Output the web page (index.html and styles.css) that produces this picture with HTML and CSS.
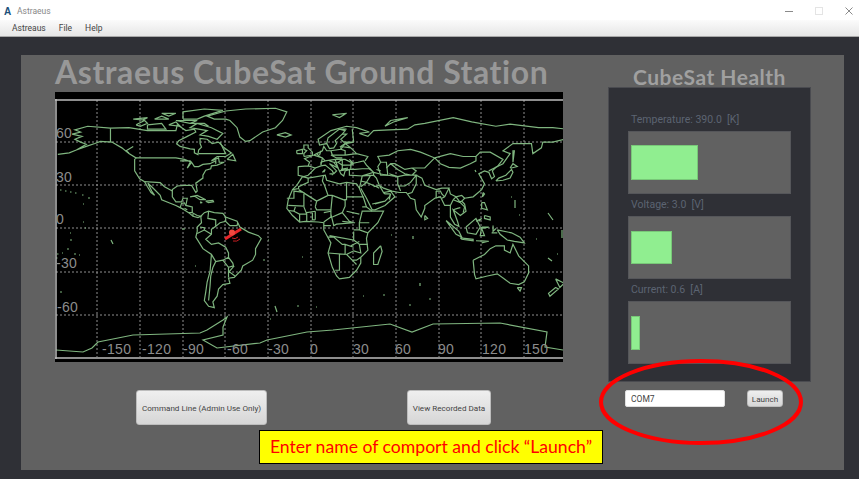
FILE: index.html
```html
<!DOCTYPE html>
<html lang="en">
<head>
    <meta charset="UTF-8">
    <title>Astraeus</title>
    <link rel="stylesheet" href="styles.css">
</head>
<body>

    <div class="titlebar">
        <span class="app-icon">A</span>
        <span class="app-name">Astraeus</span>
        <div class="win-controls">
            <svg width="10" height="10" viewBox="0 0 10 10"><path d="M1 5.5h8" stroke="#8a8a8a" fill="none"/></svg>
            <svg width="10" height="10" viewBox="0 0 10 10"><rect x="1.5" y="1.5" width="7" height="7" stroke="#e4e4e4" fill="none"/></svg>
            <svg width="10" height="10" viewBox="0 0 10 10"><path d="M1.5 1.5l7 7M8.5 1.5l-7 7" stroke="#8a8a8a" fill="none"/></svg>
        </div>
    </div>

    <div class="menubar">
        <span>Astreaus</span>
        <span>File</span>
        <span>Help</span>
    </div>

    <div class="panel">
        <div class="left">
            <h1>Astraeus CubeSat Ground Station</h1>

            <svg class="map" width="508" height="270" viewBox="55 92 508 270">
                <rect x="55" y="92" width="508" height="270" fill="#000"/>

                <!-- graticule, every 30 degrees -->
                <path class="grid" d="M97 100V357M140 100V357M183 100V357M225 100V357M268 100V357M311 100V357M353 100V357M396 100V357M439 100V357M481 100V357M524 100V357"/>
                <path class="grid" d="M56 142H563M56 185H563M56 228H563M56 272H563M56 315H563"/>

                <!-- land, drawn in lon/lat -->
                <g transform="translate(311 228.5) scale(1.4222 -1.44)">
                    <!-- north america -->
                    <path class="coast" d="M-168 65.5L-162 67L-166 68.5L-157 71L-141 69.7L-128 70L-115 68L-108 68L-95 68L-94 72L-88 68L-82 69L-81 67L-87 64L-93 61L-94.5 58.8L-92 57L-85 55.3L-82 55L-82 52.5L-79.5 51.3L-79 54.5L-77 56.5L-78 59L-78 62.5L-73 62L-69.5 59L-65 60L-61 56L-56 52.5L-60 50L-66 50L-70 47L-65 49L-64.5 46L-61 46L-66 44L-70 43.5L-70.5 41.5L-74 40.5L-76 37L-76 35L-81 31.5L-80 26L-81 25L-82.8 28L-84 30L-89 30L-94 29.5L-97.5 27L-97.5 22L-95 18.5L-91 18.5L-90 21L-87 21L-88 16L-83.5 15L-83.5 11L-80 9L-77.5 8.5L-79.5 7.5L-83 8.5L-86 11L-91 14L-95 16L-105 20L-106 23L-112 29L-114.7 31.5L-112 26L-110 23L-112.5 25L-115 29L-117 32.5L-120.5 34.5L-124 40L-124 48L-123 49L-128 52L-133 56L-140 60L-148 60.5L-152 59L-158 57L-165 54.5L-158 58.5L-162 60L-166 62L-161 64L-168 65.5M-178 51.5L-170 52.5L-165 54.5"/>
                    <path class="coast" d="M-141 69.7V60M-123 49H-95L-89 48L-84 46L-82 43L-79 43L-76 44.5L-71 45L-67 47L-67 45M-117 32.5L-106 31.8L-103 29L-97.5 26M-92 47L-85 47L-84 46L-87 42L-85 46M-92 14.5L-91 17.5L-89 17.8L-88 16M-89 14L-87 13M-83.5 11L-86 11M-83 8.5L-83 10M-79 52L-60 52L-64 60"/>
                    <path class="coast" d="M-80 73L-70 70L-62 66L-66 62L-72 64L-78 65L-73 68L-85 70L-80 73M-115 72L-105 73L-102 69L-115 69L-115 72M-90 76L-80 76L-75 78L-62 82L-75 83L-90 81L-90 76M-123 72L-117 75L-115 73L-120 71L-123 72M-95 75L-80 75L-85 73L-95 75M-59 48L-55 51.5L-53 47L-59 48M-110 76L-100 76L-105 78L-110 76M-125 57L-130 54L-128 52.5M-100 72L-95 74L-92 71L-100 72M-85 73L-75 73L-72 71M-125 76L-115 77L-118 75.5L-125 76M-105 80L-95 80L-100 78L-105 80"/>
                    <path class="coast" d="M-60 81.6L-46 83L-25 83.5L-17 81L-20 75L-25 70L-34 67L-43 61L-46 60.5L-50 63.5L-52 70L-57 75L-60 76L-68 76L-73 78L-60 81.6M-24 65L-18 66.5L-14 65L-18 63.5L-24 65"/>
                    <path class="coast" d="M-85 22L-80 23L-74 20L-78 20L-82 22.5L-85 22M-74 19L-69 19.5L-68.5 18.5L-72 18L-74 19M-78 18.5L-76.5 18L-78 17.8"/>

                    <!-- south america -->
                    <path class="coast" d="M-77.5 8.5L-75 11L-72 12L-68 11L-62 10.5L-60 8L-52 5L-50 1L-44 -2.5L-37 -5L-35 -7L-39 -14L-39 -18L-41 -22L-48 -26L-49 -29L-54 -34L-58 -34.5L-57 -38L-62 -39L-65 -42L-66 -47L-69 -51L-68 -55L-72 -54L-75 -50L-74 -44L-73 -37L-71 -30L-70 -18L-76 -14L-81 -6L-80 -2L-80 1L-77 4L-77.5 8.5"/>
                    <path class="coast" d="M-72 12L-72.5 7L-67 6L-67 1.5L-70 -0.5L-70 -4L-74 -7.5L-70 -11L-65 -10L-60 -13L-58 -17L-58 -20L-62 -22L-67 -23L-70 -18M-67 -23L-69 -27L-70.5 -33L-71 -40L-72 -50M-62 -22L-58 -27L-54.5 -26L-55 -24L-58 -20M-58 -27L-58 -34M-53.5 -33L-57.5 -30L-54 -26M-80 -3.5L-75 -1L-75 0.5L-78 1M-60 8L-60 5L-64 4L-67 1.5M-60 5L-57 2L-52 2L-51.5 4M-75 -1L-70 -4"/>

                    <!-- africa -->
                    <path class="coast" d="M-6 36L-2 35L10 37L11 33.5L20 31L25 32L32 31L34 28L37 21L39 15L43 12L51 12L47 4L40 -3L39 -7L40 -15L35 -20L35 -24L32 -29L27 -34L20 -35L18 -33L15 -27L12 -17L14 -10L9 -1L9 4L5 4.5L-4 5L-8 4.5L-13 9L-17 14L-16 20L-13 27L-10 30L-6 36"/>
                    <path class="coast" d="M-13 27L-8.7 27.7L-8.7 29L-2 32L-2 35M9 37L8 33L9.5 30L12 23L15 23M-8.7 27L4 19L3 15M25 32L25 20L24 20L24 15.5L22 11L27 5L30 4M25 22L37 22M15 23L24 19.5M-16 16L-5 15.5L-5 25L-12 26L-12 21L-17 21M4 19L12 23M3 15L4 13L14 13L15 23M14 13L14 8L9 4.5M3 12L3 6M-5 15L-3 10L-3 5M-8 4.5L-8 10L-12 12L-11 15M15 8L22 11M14 10L16 2L18 3L30 4M9 2L14 2M13 -5L30 -8L30 -2M30 -1L34 -1L34 4L41 4M34 4L36 12L43 12M36 15L39 15M40 -3L34 -1M12 -17L24 -18L24 -11L30 -13M12 -6L16 -6L22 -11L24 -11M20 -18L20 -29L17 -29M34 -11L30 -8M40 -11L34 -11L35 -17L30 -15.5L25 -18L29 -22L32 -22L35 -20M32 -25L29 -22M49 -12L50 -16L47 -25L44 -25L44 -17L49 -12M-12 12L-16 12.5M-8 10L-3 10M3 6L1 6L1 11M-3 11L3 12M9 11L14 12M25 12L34 10M22 5L31 4M28 -12L34 -9"/>

                    <!-- europe and asia -->
                    <path class="coast" d="M-9 43L-2 43.5L3 42L0 39L-2 37L-5 36L-9 37L-9 43M-2 43.5L-1 46L-4.5 48.5L2 51L4 52L8 54L9 57L11 54L14 54L21 55L24 59L30 60L23 60L21 62L25 65.5L22 65.5L17 61L18 59L16 56L13 55.5L11 59L6 58L5 62L14 68L25 71L32 70L41 67L34 66L40 64L44 68L55 68.5L68 69L73 72L80 73L100 77L113 74L130 71L140 72.5L160 70L170 70L180 69"/>
                    <path class="coast" d="M3 42L7 43.5L10 44L15 40L16 38L18 40L13 45L19 42L21 38L23 36.5L24 40L27 41L29 41M28 41L28 45L33 46L37 47L39 44L41.5 41.5L36 41.5L31 41L28 41M27 41L27 37L36 36.5L35 32L34 28M49 46L53 46L54 37L49 37L47 43L49 46"/>
                    <path class="coast" d="M-5 50L1 51L1 53L-2 56L-2 58L-5 58L-5 55L-3 54L-5 52L-5 50M-10 52L-6 52L-6 55L-10 54L-10 52M8 39L10 41L9 39M13 38L15 38L15 37M15 79L25 80L20 77L15 79M52 71L56 75L68 77L58 74L52 71"/>
                    <path class="coast" d="M2 51L8 49L7 44M6 51L7 54M8 49L10 47L17 48L24 48L30 45M14 54L15 51L24 51L24 54L21 55M24 51L32 52L40 50L38 47M24 59L28 56L32 52M30 60L29 69M11 59L12 63L20 69L25 69M22 65.5L24 68L20 69M17 48L19 42M22 48L22 41M22 44L28 44M20 40L26 41M4 52L6 50L8 49M10 47L7 46L7 44M13 47L16 46L19 46L22 48M14 51L18 49L22 49M16 46L19 42M19 46L22 44M21 41L26 42M28 44L30 45M27 48L30 45M24 59L21 57L28 56M21 57L21 55"/>
                    <path class="coast" d="M35 28L39 21L43 13L45 13L52 16L59 22L56 26L51 25L48 30L51 28L57 26L62 25L67 25L70 21L73 20L74 13L77.5 8L80 14L80 16L87 21L91 22L94 16L98 16L98 8L101 3L104 1.5L103 5L100 13L105 9L109 12L108 17L106 19L108 21L114 22L120 27L122 31L118 38L122 40L125 39L127 34.5L129 36L127.5 40L130 42.5L135 45L140 52L135 54L142 59L155 59L156 52L162 56L163 60L170 60L178 62L180 65"/>
                    <path class="coast" d="M49 46L47 50L55 51L61 54L70 55L77 53L87 49L98 52L107 50L116 50L119 53L126 53L135 48L131 43L130 42.5M87 49L91 45L97 42.5L105 42L112 45L116 47L116 50M53 42L56 45L59 45L66 41L71 42L80 42L87 49M44 39L48 38L54 37L61 36L61 31L63 26M61 36L66 37L71 37L74 37L70 32L66 29.5L61 29.5M68 24L71 25L74 31L74 37L78 35L80 30L88 27L92 28L97 28L94 22L92 21M97 28L98 24L102 22L106 23L108 21M36 36.5L44 37L46 35L48 30M35 29L39 32L46 29L48 28M43 17L52 19L55 22L56 24M100 20L98 16M100 20L105 18L102 22M105 18L108 15L107 11M100 13L103 14L105 14.5M125 40L130 42.5M41.5 41.5L44 39L36 36.5M35 33L39 32L42 37M44 37L44 39L41 41.5M46 41L49 40M44 29L48 30M51 25L52 24L56 24M52 19L45 17M56 24L55 20M56 45L61 41L66 38L71 37M61 36L55 38M71 42L74 40L71 37M94 22L92 24L91 26L88 26M88 21L88 26M102 22L100 20M106 19L104 18"/>
                    <path class="coast" d="M130 33L132 35L137 37L140 40L141 41L142 39L140 35L135 33.5L130 33M140 42L142 45L145 43L141 42L140 42M142 46L143 54L142 54L142 46M80 9L82 7L80 6L80 9M121 25L122 24L120.5 22L121 25"/>

                    <!-- islands and oceania -->
                    <path class="coast" d="M95 5.5L104 -2L106 -6L102 -4L95 5.5M105 -6.5L114 -7.5L114 -8.5L106 -7.5L105 -6.5M109 1L116 7L119 1L116 -4L110 -3L109 1M120 1L125 1L120 0L122 -5L119 -5L120 1M131 -1L141 -3L147 -6L150 -10L143 -9L138 -8L133 -4L131 -1M120 18L122 18L124 13L120 14L120 18M122 9L126 8L126 6L122 7L122 9M116 -8.5L125 -9L120 -8.5M118 5L120 7L116 5M128 2L128 -2L130 0M124 -9L120 -10M127 -3L131 -3"/>
                    <path class="coast" d="M114 -22L122 -18L126 -14L130 -12L136 -12L136 -15L140 -17L142 -11L146 -19L153 -26L153 -31L150 -37L146 -39L140 -38L136 -35L131 -31.5L124 -33L116 -35L115 -32L114 -22M145 -41L148 -41L147 -43.5L145 -41M172 -35L178 -38L175 -41L172 -35M172 -41L174 -42L168 -47L167 -45L172 -41"/>
                </g>

                <!-- antarctica and small islands, in page pixels -->
                <path class="coast" d="M56 350L83 352L92 348L98 342L133 335L200 333L207 330L223 320L227 317L223 327L223 335L203 340L217 348L260 343L267 340L307 332L333 330L390 324L412 332L433 324L500 323L547 332L545 347L563 350"/>
                <path class="coast" d="M60 190h1.5M65 191h1.5M70 192h1.5M75 193h1.5M82 195h1.5M88 198h2M83 204h1M70 233h1M83 222h1M85 228h1M70 240h2M111 240l2 4M57 254h1.5M67 249h2M74 254h2M56 258h1.5M62 253h1M79 255h1M195 266h1M60 292h2M182 229h3M391 235h1M413 236v3M429 299h2M420 283v3M363 296h1M383 295h2M409 305h2M316 307h1M302 257h1M268 240h1M515 200v8M548 213l5 7M562 230v8M548 258l4 3M557 254h1M475 170l1 2M511 197h1M519 215h1M536 239h1M263 260h2M297 306h2M270 319h1M275 306l2 6"/>

                <!-- frame lines of the plot -->
                <path class="frame" d="M55 100H563M56 99V359M55 358H563"/>

                <!-- satellite -->
                <path class="sat-arm" d="M225 239L241 229"/>
                <circle class="sat-body" cx="232" cy="232.5" r="3"/>
                <path class="sat-wave" d="M232 238a5 5 0 0 0 6 -1M233 241a7 7 0 0 0 7 -2"/>

                <text class="axis" x="56" y="138">60</text>
                <text class="axis" x="56" y="182">30</text>
                <text class="axis" x="56" y="224">0</text>
                <text class="axis" x="56" y="268">-30</text>
                <text class="axis" x="57" y="312">-60</text>
                <text class="axis" x="102" y="354">-150</text>
                <text class="axis" x="142" y="354">-120</text>
                <text class="axis" x="183" y="354">-90</text>
                <text class="axis" x="227" y="354">-60</text>
                <text class="axis" x="268" y="354">-30</text>
                <text class="axis" x="310" y="354">0</text>
                <text class="axis" x="353" y="354">30</text>
                <text class="axis" x="395" y="354">60</text>
                <text class="axis" x="438" y="354">90</text>
                <text class="axis" x="482" y="354">120</text>
                <text class="axis" x="524" y="354">150</text>
            </svg>

            <div class="actions">
                <button class="btn-cmd">Command Line (Admin Use Only)</button>
                <button class="btn-data">View Recorded Data</button>
            </div>
        </div>

        <div class="right">
            <h2>CubeSat Health</h2>
            <div class="health">
                <div class="gauge-label">Temperature: 390.0  [K]</div>
                <div class="gauge"><div class="bar" style="width: 67px; height: 35px"></div></div>
                <div class="gauge-label">Voltage: 3.0  [V]</div>
                <div class="gauge"><div class="bar" style="width: 41px; height: 33px"></div></div>
                <div class="gauge-label">Current: 0.6  [A]</div>
                <div class="gauge"><div class="bar" style="width: 9px; height: 34px"></div></div>
            </div>
            <div class="launch-row">
                <input class="port-input" type="text" value="COM7">
                <button class="btn-launch">Launch</button>
            </div>
        </div>

        <!-- annotations on top of the screenshot -->
        <svg class="ring" width="208" height="90" viewBox="0 0 208 90">
            <ellipse cx="104" cy="45" rx="100" ry="41"/>
        </svg>
        <div class="note">Enter name of comport and click “Launch”</div>
    </div>

</body>
</html>
```

FILE: styles.css
```css
body {
    margin: 0;
    height: 479px;
    overflow: hidden;
    background-color: #2f3036;
    font-family: Roboto, Arial, sans-serif;
    display: flex;
    flex-direction: column;
}
.titlebar {
    height: 20px;
    background-color: #fff;
    display: flex;
    align-items: center;
    padding-left: 4px;
    padding-top: 2px;
    box-sizing: border-box;
}
.app-icon {
    width: 9px;
    font-size: 10px;
    font-weight: bold;
    color: #1b4f7a;
    font-family: "Liberation Sans", sans-serif;
}
.app-name {
    margin-left: 4px;
    font-size: 8.5px;
    color: #888;
}
.win-controls {
    margin-left: auto;
    margin-right: 5px;
    display: flex;
    gap: 20px;
}
.menubar {
    height: 17px;
    box-sizing: border-box;
    background: linear-gradient(#fbfbfb, #e6e6e6);
    border-bottom: 1px solid #a8a8a8;
    display: flex;
    gap: 13px;
    align-items: center;
    padding-left: 12px;
    font-size: 8.5px;
    color: #444;
}
.panel {
    position: relative;
    margin: 18px 15px 9px 21px;
    height: 415px;
    background-color: #616161;
    display: flex;
}
.left {
    width: 508px;
    margin-left: 34px;
}
h1 {
    margin: 0;
    height: 37px;
    font-family: Lato, sans-serif;
    font-weight: bold;
    font-size: 32px;
    line-height: 33px;
    letter-spacing: 0.55px;
    color: #989898;
    white-space: nowrap;
}
.map {
    display: block;
}
.grid {
    fill: none;
    stroke: #8f8f8f;
    stroke-width: 1;
    stroke-dasharray: 2 2;
}
.coast {
    fill: none;
    stroke: #7fb57f;
    stroke-width: 1.2;
    vector-effect: non-scaling-stroke;
}
.frame {
    fill: none;
    stroke: #bdbdbd;
    stroke-width: 1.5;
}
.sat-arm {
    stroke: #e8262a;
    stroke-width: 3;
    fill: none;
}
.sat-body {
    fill: #f04a40;
}
.sat-wave {
    stroke: #c81e22;
    stroke-width: 1;
    fill: none;
}
.axis {
    font-family: "Liberation Sans", Arial, sans-serif;
    font-size: 14px;
    fill: #8c8c8c;
    letter-spacing: 0.3px;
}
.actions {
    margin-top: 28px;
    padding-left: 81px;
    display: flex;
    gap: 140px;
}
button {
    height: 35px;
    padding: 0;
    border: 1px solid #bdbdbd;
    border-radius: 3px;
    background: linear-gradient(#efefef, #d6d6d6);
    font-family: Roboto, Arial, sans-serif;
    font-size: 8.1px;
    color: #444;
    white-space: nowrap;
}
.btn-cmd {
    width: 131px;
}
.btn-data {
    width: 84px;
}
.right {
    width: 203px;
    margin-left: 45px;
}
h2 {
    margin: 0;
    height: 32px;
    font-family: Lato, sans-serif;
    font-weight: bold;
    font-size: 21px;
    line-height: 43px;
    letter-spacing: 0.5px;
    color: #a0a0a0;
    text-align: center;
    white-space: nowrap;
}
.health {
    height: 295px;
    box-sizing: border-box;
    background-color: #2f3036;
    border: 1px solid #4a4b50;
    padding: 22px 19px 0;
}
.gauge-label {
    height: 21px;
    padding-left: 3px;
    font-size: 10.5px;
    line-height: 20px;
    color: #5c6472;
    white-space: pre;
}
.gauge {
    height: 63px;
    box-sizing: border-box;
    background-color: #616161;
    border: 1px solid #55565a;
    display: flex;
    align-items: center;
    padding-left: 2px;
    margin-bottom: 1px;
}
.bar {
    box-sizing: border-box;
    background-color: #90ee90;
    border: 1px solid #78c878;
}
.launch-row {
    margin-top: 8px;
    margin-left: 17px;
    display: flex;
    align-items: flex-start;
    gap: 22px;
}
.port-input {
    width: 100px;
    height: 17px;
    box-sizing: border-box;
    padding: 0 5px;
    border: 1px solid #e0e0e0;
    border-radius: 2px;
    font-family: Roboto, Arial, sans-serif;
    font-size: 8.5px;
    color: #444;
    background-color: #fff;
}
.btn-launch {
    width: 36px;
    height: 17px;
}
.ring {
    position: absolute;
    left: 576px;
    top: 302px;
}
.ring ellipse {
    fill: none;
    stroke: #ff0000;
    stroke-width: 4;
}
.note {
    position: absolute;
    left: 238px;
    top: 375px;
    width: 344px;
    height: 34px;
    box-sizing: border-box;
    border: 1px solid #000;
    background-color: #ffff00;
    color: #ff0000;
    font-family: Lato, sans-serif;
    font-size: 17.6px;
    line-height: 32px;
    text-align: center;
    white-space: nowrap;
}
```
